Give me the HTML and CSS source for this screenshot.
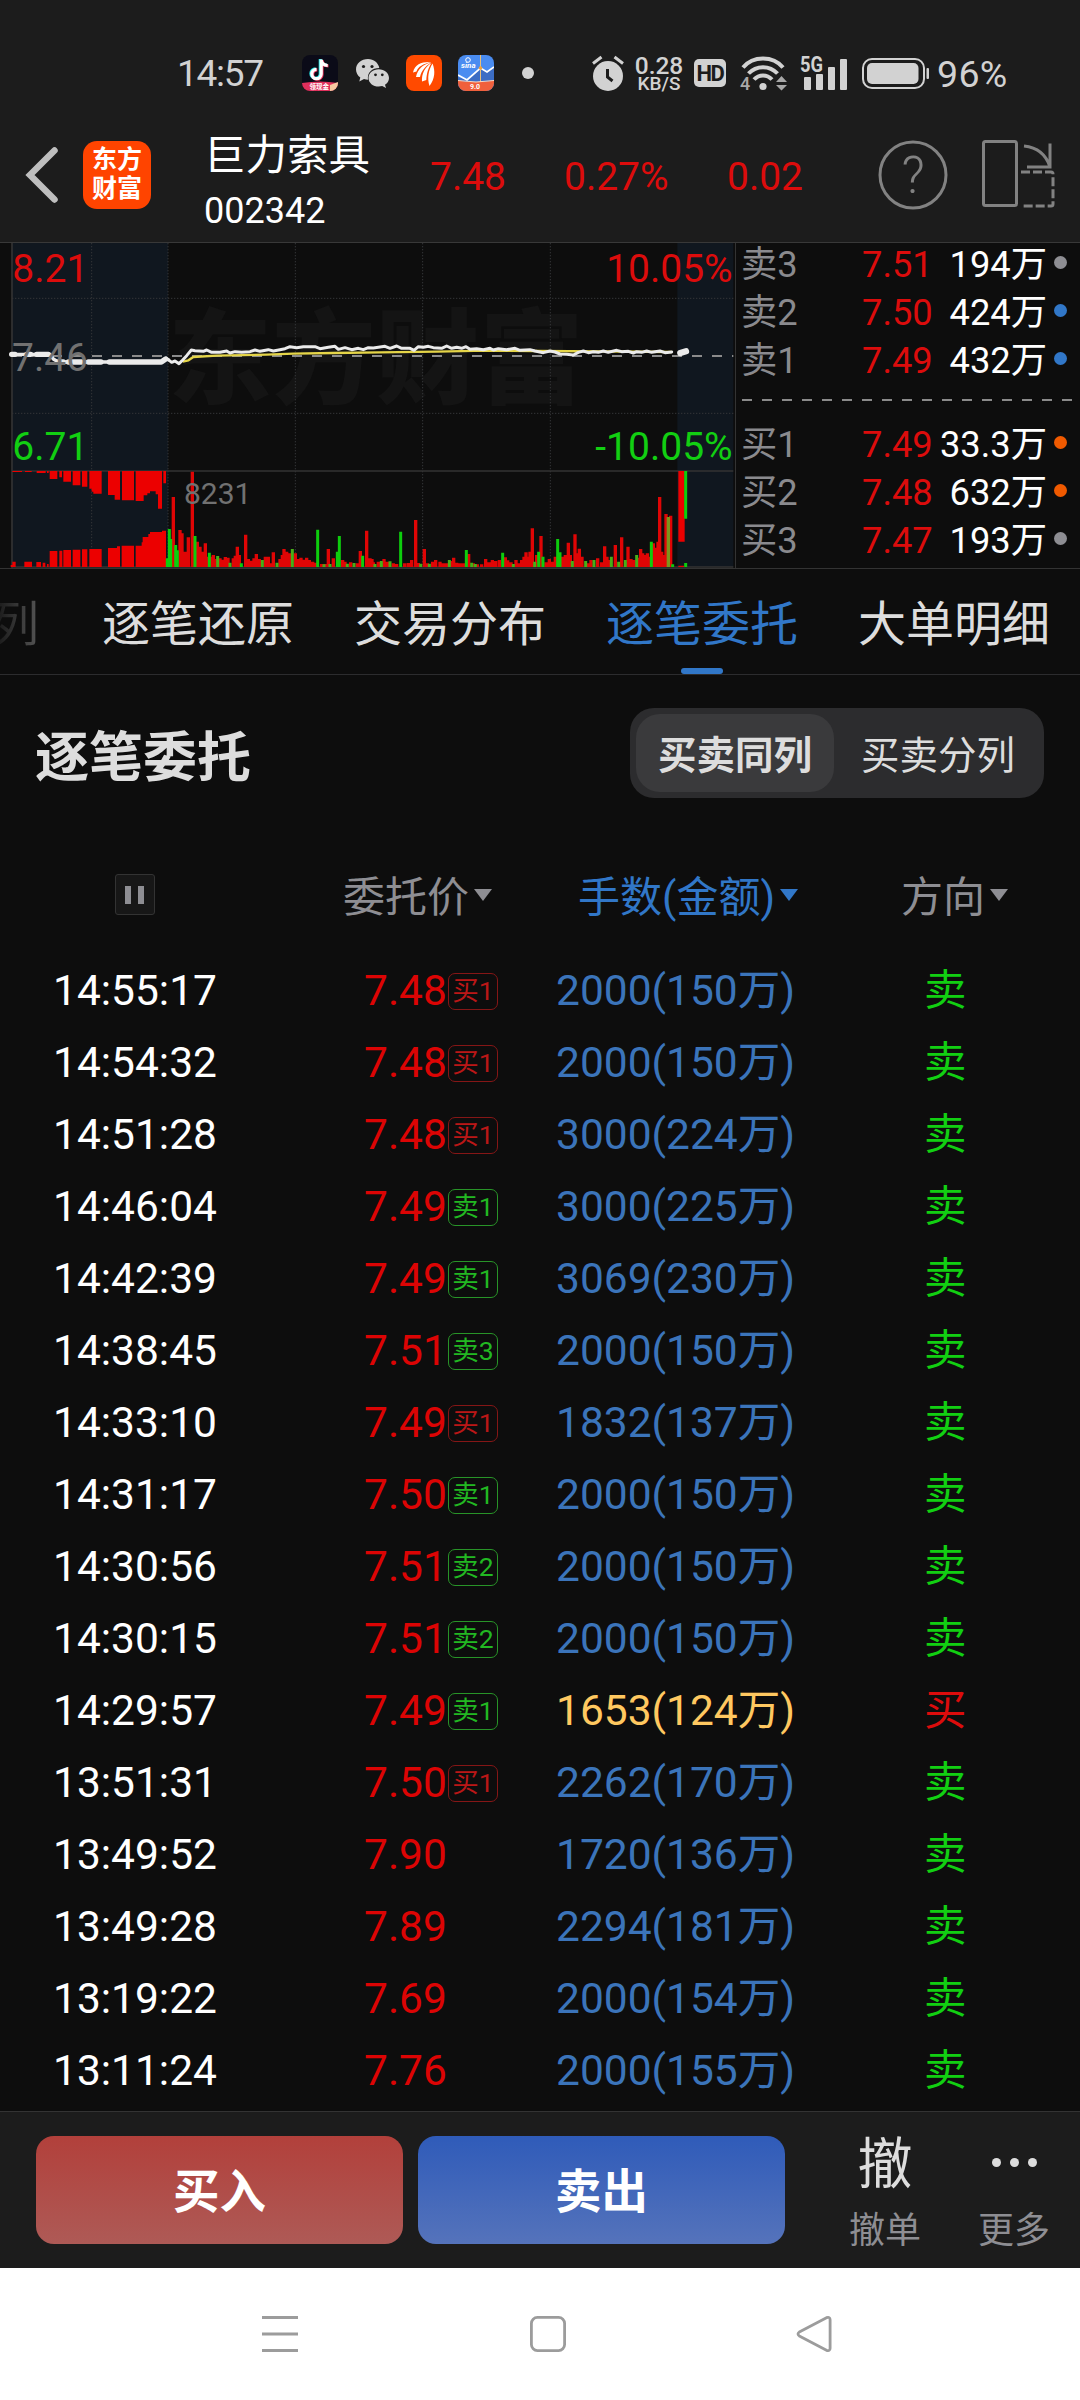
FILE: index.html
```html
<!DOCTYPE html>
<html lang="zh-CN">
<head>
<meta charset="utf-8">
<title>巨力索具 002342</title>
<link rel="stylesheet" href="styles.css">
</head>
<body>
<div class="statusbar">
  <span class="clock">14:57</span>
  <svg class="app-icon" viewBox="0 0 36 36">
    <defs><clipPath id="r1"><rect width="36" height="36" rx="8"/></clipPath></defs>
    <g clip-path="url(#r1)">
      <rect width="36" height="36" fill="#0b0b18"/>
      <g fill="none" stroke-width="3.2"><path d="M18.3 4v14.500a4.700 4.700 0 1 1-4.700-4.700M18.300 4.500c.4 3.200 2.800 5.300 6.500 5.500" stroke="#25e6e6"/><path d="M20 5v14.500a4.700 4.700 0 1 1-4.700-4.700M20 5.500c.4 3.200 2.800 5.300 6.500 5.500" stroke="#f0305a"/><path d="M19.200 4.500v14.500a4.700 4.700 0 1 1-4.700-4.700M19.200 5c.4 3.200 2.800 5.300 6.500 5.500" stroke="#fff"/></g>
      <path d="M0 28q18-3 36 0v9H0z" fill="#e0305c"/><path d="M28 30l8-3v9h-8z" fill="#f6c9a0"/>
      <text class="tiny" x="7.500" y="34" font-size="6.500">领现金</text>
    </g>
  </svg>
  <svg class="wechat" viewBox="0 0 34 29" fill="#d2d2d2">
    <path d="M12 0C5.300 0 0 4.600 0 10.500c0 3.300 1.700 6.100 4.300 8L3.300 22.500l4.700-2.400c1.300.4 2.600.6 4 .6C11 13.500 16 9 23.300 9 22.300 3.800 17.700 0 12 0z"/>
    <path d="M22.700 10.200c-5.700 0-10.200 3.900-10.200 8.700s4.500 8.700 10.200 8.700c1.200 0 2.400-.2 3.500-.5l3.800 1.900-1-3.200c2.400-1.600 4-4 4-6.900 0-4.800-4.600-8.700-10.300-8.700z"/>
    <g fill="#1c1c1c"><circle cx="7.500" cy="7.500" r="1.600"/><circle cx="16" cy="7.500" r="1.600"/><circle cx="19.500" cy="15.800" r="1.400"/><circle cx="26.300" cy="15.800" r="1.400"/></g>
  </svg>
  <svg class="app-icon em" viewBox="0 0 36 36">
    <rect width="36" height="36" rx="8" fill="#ff4a00"/>
    <path d="M7 17.500C9 9 16 6.500 25 7c-8 2-13 4.500-14.500 9.500zM10 22c1.500-8 7-12.500 15-14.500-6.500 4.500-9.500 8.500-11 14.500zM16 26.500c-.5-8 3-14.500 9.500-18.500-3.500 5.500-4.700 10-5.200 17zM23.500 31c-2.500-8-1-16 3-22.500 3 7.500 2.500 15-3 22.500z" fill="#fff"/>
  </svg>
  <svg class="app-icon sina" viewBox="0 0 36 36">
    <defs><clipPath id="r2"><rect width="36" height="36" rx="8"/></clipPath></defs>
    <g clip-path="url(#r2)">
      <rect width="36" height="36" fill="#4a8cf0"/><path d="M0 22l9 3 13-12 7 4 7-5v20H0z" fill="#3c6dc4"/>
      <path d="M0 20l9 5L22.500 13l6.500 4 7-5" fill="none" stroke="#fff" stroke-width="1.800"/>
      <path d="M22.500 0v27" stroke="#e8c07a"/><circle cx="22.500" cy="13" r="1.800" fill="#f2a33a"/>
      <path d="M0 25.500q18 3 36 0V36H0z" fill="#f0603c"/><path d="M0 25.500q18 3 36 0" fill="none" stroke="#fbd9c4"/>
      <text class="tiny" x="3" y="13" font-size="8" font-style="italic">sina</text>
      <circle cx="10" cy="5" r="2.300" fill="none" stroke="#fff"/>
      <text class="tiny" x="12" y="34" font-size="7">9.0</text>
    </g>
  </svg>
  <span class="dot"></span>
  <svg class="alarm" viewBox="0 0 32 35"><circle cx="16" cy="20" r="15" fill="#d2d2d2"/><path d="M1 7.500L9.500 1M31 7.500L22.500 1" stroke="#d2d2d2" stroke-width="3"/><path d="M15.500 13v8l5 4" fill="none" stroke="#1c1c1c" stroke-width="3"/></svg>
  <span class="speed"><b>0.28</b><i>KB/S</i></span>
  <span class="hd">HD</span>
  <svg class="wifi" viewBox="0 0 46 35"><g fill="none" stroke="#d2d2d2" stroke-width="4"><path d="M3 11.500C13-.5 33-.5 43 11.500"/><path d="M8.500 17.500c8-8.500 21-8.500 29 0"/><path d="M14 23.500c5-5.500 13-5.500 18 0"/></g><circle cx="23" cy="30.500" r="3.600" fill="#d2d2d2"/><text x="0" y="34" class="four">4</text><path d="M36 26l5.500-6 5.500 6zM36 29h11l-5.500 5.500z" fill="#a8a8a8"/></svg>
  <svg class="signal" viewBox="0 0 47 33"><text x="-1" y="15" class="fiveg" textLength="23" lengthAdjust="spacingAndGlyphs">5G</text><g fill="#d2d2d2"><rect x="3" y="20" width="7" height="13" rx="1"/><rect x="15" y="17" width="7" height="16" rx="1"/><rect x="27" y="10" width="7" height="23" rx="1"/><rect x="39" y="2" width="7" height="31" rx="1"/></g></svg>
  <svg class="battery" viewBox="0 0 67 31"><rect x="1" y="1" width="61" height="29" rx="9" fill="none" stroke="#d2d2d2" stroke-width="2"/><rect x="5" y="5" width="51.500" height="21" rx="5" fill="#d2d2d2"/><rect x="64.500" y="10" width="2.500" height="11" rx="1" fill="#d2d2d2"/></svg>
  <span class="percent">96%</span>
</div>

<header class="header">
  <svg class="back" viewBox="0 0 32 56"><path d="M28.500 3.500L4 28l24.500 24.500" fill="none" stroke="#bebebe" stroke-width="6.500" stroke-linecap="round"/></svg>
  <div class="logo">东方<br>财富</div>
  <div class="stock"><div class="name">巨力索具</div><div class="code">002342</div></div>
  <span class="quote q1">7.48</span><span class="quote q2">0.27%</span><span class="quote q3">0.02</span>
  <svg class="help" viewBox="0 0 70 70"><circle cx="35" cy="35" r="33" fill="none" stroke="#828282" stroke-width="3"/><text x="35" y="53" text-anchor="middle">?</text></svg>
  <svg class="rotate" viewBox="0 0 72 68" fill="none" stroke="#828282" stroke-width="3"><rect x="1.500" y="1.500" width="33" height="64" rx="2"/><path d="M42 6q20 2 26 21M68 3.500v23.500H45"/><path d="M39 32h30q2 0 2 2v30q0 2-2 2H39" stroke-dasharray="9 3"/></svg>
</header>

<section class="market">
  <svg class="chart" viewBox="0 24 2205 975">
    <rect x="36" y="24" width="468" height="972" fill="#10171f"/>
    <rect x="2032" y="24" width="168" height="972" fill="#10171f"/>
    <text class="watermark" x="505" y="482" textLength="1245">东方财富</text>
    <g stroke="#343638" stroke-width="3" stroke-dasharray="4 5" fill="none">
      <path d="M36 190H2200M36 535H2200M275 24V996M504 24V996M886 24V996M1268 24V996M1651 24V996"/>
    </g>
    <path d="M36 24V999M36 708H2200M36 996H2200" stroke="#333" stroke-width="5" fill="none"/>
    <path d="M36 363H2200" stroke="#8b8b8b" stroke-width="6" stroke-dasharray="30 30"/>
    <g fill="#ec0000">
      <path d="M37 708h29v3h-29zM75 708h20v3h-20zM110 708h27v6h-27zM141 708h5v6h-5zM149 708h23v24h-23zM178 708h8v19h-8zM190 708h23v32h-23zM218 708h23v43h-23zM246 708h16v47h-16zM268 708h37v68h-25v-6h-5v-9h-7zM324 708h36v86h-16v-14h-20zM366 708h36v88h-36zM407 708h79v113h-12v-43h-7v-9h-17v6h-8v6h-11v17h-24zM490 708h8v37h-8z"/>
      <path d="M32 990h5v-10h10v16h-15zM73 980h23v16h-23zM109 981h14v15h-14zM128 983h8v13h-8zM141 987h5v9h-5zM149 948h23v48h-23zM178 947h9v49h-9zM190 945h23v51h-23zM218 944h23v52h-23zM246 943h16v53h-16zM268 942h37v54h-37zM324 939h27v-5h9v62h-36zM365 932h37v64h-37zM407 932h18v-10h3v-16h17v-9h5v-6h36v-4h12v109h-91z"/>
      <path d="M2035 708h19v212h-19zM2035 992h17v4h-17z"/>
    </g>
    <path stroke="#e00505" stroke-width="10" fill="none" d="M520 996V786M540 996V885M546 996V895M556 996V950M565 996V907M577 996V710M592 996V920M600 996V935M607 996V950M616 996V925M622 996V965M634 996V965M640 996V960M648 996V972M660 996V970M668 996V974M676 996V966M684 996V968M700 996V970M706 996V962M712 996V935M718 996V960M737 996V899M745 996V972M755 996V977M762 996V970M769 996V957M778 996V972M796 996V965M805 996V965M812 996V985M820 996V952M840 996V972M847 996V960M852 996V942M860 996V950M868 996V955M886 996V955M895 996V972M903 996V968M912 996V974M920 996V968M928 996V975M938 996V980M946 996V983M965 996V987M975 996V987M985 996V942M1000 996V970M1028 996V975M1035 996V980M1052 996V982M1072 996V985M1081 996V948M1100 996V887M1107 996V970M1116 996V972M1136 996V985M1110 996V970M1120 996V982M1135 996V980M1152 996V972M1162 996V980M1180 996V985M1190 996V987M1214 996V985M1225 996V984M1235 996V975M1247 996V855M1255 996V984M1273 996V942M1282 996V985M1298 996V980M1307 996V975M1320 996V980M1330 996V985M1340 996V985M1355 996V978M1361 996V968M1370 996V983M1380 996V985M1390 996V985M1406 996V957M1420 996V985M1432 996V988M1445 996V988M1457 996V972M1467 996V982M1477 996V975M1487 996V978M1498 996V975M1516 996V967M1523 996V976M1533 996V982M1548 996V975M1557 996V985M1565 996V975M1572 996V965M1578 996V952M1584 996V965M1590 996V950M1597 996V880M1610 996V960M1623 996V903M1638 996V982M1648 996V972M1658 996V980M1666 996V965M1687 996V965M1696 996V960M1705 996V923M1711 996V960M1725 996V898M1731 996V955M1738 996V941M1746 996V965M1765 996V985M1773 996V975M1793 996V970M1805 996V982M1814 996V934M1821 996V965M1827 996V975M1846 996V930M1865 996V907M1884 996V935M1893 996V972M1902 996V975M1916 996V968M1922 996V942M1928 996V955M1935 996V960M1942 996V955M1948 996V965M1960 996V925M1967 996V938M1974 996V920M1979 996V786M1985 996V950M1991 996V960M1998 996V837M2012 996V842"/>
    <path stroke="#0dcd0d" stroke-width="9" fill="none" d="M502 996V970M508 996V882M512 996V912M527 996V930M532 996V946M585 996V903M628 996V953M724 996V985M953 996V884M1012 996V950M1018 996V903M1088 996V962M1202 996V890M1399 996V945M1508 996V953M1616 996V950M1629 996V965M1673 996V912M1680 996V952M1954 996V920M2018 996V988M2057 996V984M2057 708V851"/>
    <path stroke="#46b018" stroke-width="9" fill="none" d="M653 996V963M690 996V983M787 996V975M831 996V983M877 996V942M972 996V988M990 996V987M1042 996V986M1062 996V984M1125 996V987M1144 996V978M1170 996V979M1262 996V986M1288 996V986M1348 996V975M1415 996V983M1426 996V987M1540 996V987M1604 996V980M1717 996V978M1757 996V978M1782 996V975M1834 996V965M1856 996V980M1876 996V975M1910 996V960"/>
    <path stroke="#7c941c" stroke-width="10" d="M2005 996V846"/>
    <path d="M548 380L565 376 580 366 650 362 800 359 880 356 1000 354 1140 352 1310 350 1460 347 1610 348 1810 349 2015 351" fill="none" stroke="#e5d548" stroke-width="7"/>
    <g fill="none" stroke="#ebebeb" stroke-linejoin="round" stroke-linecap="round">
      <path stroke-width="9" d="M505 374L515 382 525 378 537 386 548 375 560 362 574 345 585 347 610 349 620 345 635 352 660 352 680 348 690 354 705 350 725 352 750 350 765 345 780 349 805 344 820 348 840 344 855 341 870 335 890 338 910 335 945 335 960 341 985 337 1005 334 1015 343 1035 338 1055 344 1075 340 1090 344 1105 338 1120 339 1135 337 1155 334 1170 340 1190 333 1205 340 1230 340 1242 346 1255 335 1270 337 1285 334 1300 338 1325 340 1340 333 1355 340 1370 337 1385 340 1398 335 1410 343 1430 341 1450 344 1470 340 1480 345 1495 341 1520 344 1545 340 1560 346 1590 344 1605 348 1630 353 1650 348 1665 351 1680 357 1700 358 1720 360 1735 352 1750 348 1765 353 1780 350 1795 352 1810 348 1825 352 1850 346 1865 350 1885 349 1900 354 1910 350 1925 352 1940 348 1955 352 1980 348 1995 353 2015 351"/>
      <path stroke-width="10" d="M35 358H150L160 372 175 381H485L497 370 505 374"/>
      <path stroke-width="16" d="M35 358H45M80 358H92M110 358H145M175 381H190M205 381H245M265 381H303M328 381H484L497 372"/>
      <path stroke-width="19" d="M2041 354L2058 349"/>
    </g>
    <g class="axis">
      <text x="37" y="141" fill="#dc0c0c">8.21</text>
      <text x="36" y="408" fill="#717171">7.46</text>
      <text x="37" y="675" fill="#12cf12">6.71</text>
      <text x="2198" y="141" fill="#dc0c0c" text-anchor="end">10.05%</text>
      <text x="2198" y="675" fill="#12cf12" text-anchor="end">-10.05%</text>
      <text x="552" y="806" fill="#717171" class="volume">8231</text>
    </g>
  </svg>
  <div class="book">
    <div class="level"><span>卖3</span><b>7.51</b><em>194万</em><i class="gray"></i></div>
    <div class="level"><span>卖2</span><b>7.50</b><em>424万</em><i class="blue"></i></div>
    <div class="level"><span>卖1</span><b>7.49</b><em>432万</em><i class="blue"></i></div>
    <svg class="split" viewBox="0 0 330 2"><path d="M0 1H330" stroke="#8a8a8a" stroke-width="2" stroke-dasharray="10 10"/></svg>
    <div class="level"><span>买1</span><b>7.49</b><em>33.3万</em><i class="orange"></i></div>
    <div class="level"><span>买2</span><b>7.48</b><em>632万</em><i class="orange"></i></div>
    <div class="level"><span>买3</span><b>7.47</b><em>193万</em><i class="gray"></i></div>
  </div>
</section>

<nav class="tabs">
  <span class="tab faded">列</span><span class="tab">逐笔还原</span><span class="tab">交易分布</span><span class="tab active">逐笔委托</span><span class="tab">大单明细</span>
</nav>

<div class="section-head">
  <h1>逐笔委托</h1>
  <div class="segmented"><span class="seg on">买卖同列</span><span class="seg">买卖分列</span></div>
</div>

<div class="grid-head">
  <div><span class="pause"></span></div>
  <div class="sort">委托价</div>
  <div class="sort on">手数(金额)</div>
  <div class="sort">方向</div>
</div>

<main class="orders">
  <div class="row"><span>14:55:17</span><span class="price">7.48<i class="tag buy">买1</i></span><span class="qty">2000(150万)</span><span class="sell">卖</span></div>
  <div class="row"><span>14:54:32</span><span class="price">7.48<i class="tag buy">买1</i></span><span class="qty">2000(150万)</span><span class="sell">卖</span></div>
  <div class="row"><span>14:51:28</span><span class="price">7.48<i class="tag buy">买1</i></span><span class="qty">3000(224万)</span><span class="sell">卖</span></div>
  <div class="row"><span>14:46:04</span><span class="price">7.49<i class="tag">卖1</i></span><span class="qty">3000(225万)</span><span class="sell">卖</span></div>
  <div class="row"><span>14:42:39</span><span class="price">7.49<i class="tag">卖1</i></span><span class="qty">3069(230万)</span><span class="sell">卖</span></div>
  <div class="row"><span>14:38:45</span><span class="price">7.51<i class="tag">卖3</i></span><span class="qty">2000(150万)</span><span class="sell">卖</span></div>
  <div class="row"><span>14:33:10</span><span class="price">7.49<i class="tag buy">买1</i></span><span class="qty">1832(137万)</span><span class="sell">卖</span></div>
  <div class="row"><span>14:31:17</span><span class="price">7.50<i class="tag">卖1</i></span><span class="qty">2000(150万)</span><span class="sell">卖</span></div>
  <div class="row"><span>14:30:56</span><span class="price">7.51<i class="tag">卖2</i></span><span class="qty">2000(150万)</span><span class="sell">卖</span></div>
  <div class="row"><span>14:30:15</span><span class="price">7.51<i class="tag">卖2</i></span><span class="qty">2000(150万)</span><span class="sell">卖</span></div>
  <div class="row"><span>14:29:57</span><span class="price">7.49<i class="tag">卖1</i></span><span class="qty big">1653(124万)</span><span class="bid">买</span></div>
  <div class="row"><span>13:51:31</span><span class="price">7.50<i class="tag buy">买1</i></span><span class="qty">2262(170万)</span><span class="sell">卖</span></div>
  <div class="row"><span>13:49:52</span><span class="price">7.90</span><span class="qty">1720(136万)</span><span class="sell">卖</span></div>
  <div class="row"><span>13:49:28</span><span class="price">7.89</span><span class="qty">2294(181万)</span><span class="sell">卖</span></div>
  <div class="row"><span>13:19:22</span><span class="price">7.69</span><span class="qty">2000(154万)</span><span class="sell">卖</span></div>
  <div class="row"><span>13:11:24</span><span class="price">7.76</span><span class="qty">2000(155万)</span><span class="sell">卖</span></div>
</main>

<footer class="actions">
  <div class="btn buy-btn">买入</div>
  <div class="btn sell-btn">卖出</div>
  <div class="tool cancel"><span class="glyph">撤</span><span class="label">撤单</span></div>
  <div class="tool more"><span class="dots"><i></i><i></i><i></i></span><span class="label">更多</span></div>
</footer>

<div class="navbar">
  <svg viewBox="0 0 36 40" fill="none" stroke="#9c9c9c" stroke-width="3"><path d="M0 3.500h36M0 20h36M0 36.500h36"/></svg>
  <svg viewBox="0 0 36 40" fill="none" stroke="#9c9c9c" stroke-width="2.800"><rect x="1.400" y="3.400" width="33.200" height="33.200" rx="6"/></svg>
  <svg viewBox="0 0 36 40" fill="none" stroke="#9c9c9c" stroke-width="2.800" stroke-linejoin="round"><path d="M30.500 3.700L3.300 18q-2.600 2 0 4l27.200 14.300q3.600 1.200 3.600-2V5.700q0-3.200-3.600-2z"/></svg>
</div>
</body>
</html>
```
FILE: styles.css
```css
* { box-sizing: border-box; }
body {
  margin: 0;
  width: 1080px;
  height: 2400px;
  display: flex;
  flex-direction: column;
  overflow: hidden;
  background: #0d0d0d;
  color: #fff;
  font-family: Roboto, "Noto Sans CJK SC", sans-serif;
}
svg { display: block; flex: none; overflow: visible; }
i, em { font-style: normal; }
b { font-weight: 400; }

/* system status bar */
.statusbar {
  height: 110px;
  flex: none;
  display: flex;
  align-items: center;
  padding: 36px 0 0 177px;
  background: #1c1c1c;
  color: #d2d2d2;
}
.clock { width: 125px; font-size: 37px; letter-spacing: -1.3px; line-height: 40px; padding-top: 1px; }
.app-icon { width: 36px; height: 36px; }
.tiny { fill: #fff; font-weight: 700; }
.wechat { width: 34px; height: 29px; margin-left: 18px; }
.em { margin-left: 16px; }
.sina { margin-left: 16px; }
.dot { width: 12px; height: 12px; border-radius: 50%; background: #d2d2d2; margin-left: 28px; }
.alarm { width: 32px; height: 35px; margin-left: 58px; }
.speed { width: 56px; margin-left: 7px; padding-top: 3px; display: flex; flex-direction: column; align-items: center; font-weight: 500; }
.speed b { font-weight: 500; font-size: 24.5px; line-height: 19px; }
.speed i { font-size: 19px; line-height: 18px; }
.hd { width: 32px; height: 28px; margin-left: 7px; border-radius: 5px; background: #d2d2d2; color: #1c1c1c; font-size: 22px; font-weight: 700; line-height: 29px; letter-spacing: -1.5px; text-align: center; white-space: nowrap; }
.wifi { width: 46px; height: 35px; margin-left: 14px; }
.four { font-size: 18px; font-weight: 500; fill: #a8a8a8; }
.signal { width: 47px; height: 33px; margin-left: 15px; }
.fiveg { font-size: 22px; font-weight: 700; fill: #d2d2d2; }
.battery { width: 67px; height: 31px; margin-left: 14px; }
.percent { margin-left: 8px; font-size: 37.5px; letter-spacing: .3px; line-height: 40px; padding-top: 2px; }

/* stock header */
.header {
  height: 133px;
  flex: none;
  display: flex;
  align-items: center;
  padding: 0 26px;
  background: #1c1c1c;
  border-bottom: 1px solid #383838;
}
.back { width: 32px; height: 56px; margin-top: -3px; }
.logo { width: 68px; height: 68px; margin: -3px 0 0 25px; padding: 4px 0 0; border-radius: 14px; background: #ff4400; font-size: 25px; font-weight: 700; line-height: 29px; text-align: center; }
.stock { margin-left: 53px; width: 226px; padding-top: 11px; }
.name { font-size: 41.5px; line-height: 56px; }
.code { font-size: 36px; line-height: 50px; margin-top: 2px; }
.quote { color: #dc0c0c; font-size: 39px; line-height: 44px; padding-top: 1px; }
.q1 { width: 134px; }
.q2 { width: 163px; }
.q3 { width: 151px; }
.help { width: 70px; height: 70px; margin-top: -3px; }
.help text { fill: #828282; font-size: 51px; font-weight: 300; }
.rotate { width: 72px; height: 68px; margin: -4px 0 0 34px; }

/* chart and order book */
.market { height: 326px; flex: none; display: flex; border-bottom: 1px solid #333; }
.chart { width: 736px; height: 325px; border-right: 1px solid #333; }
.watermark { font-size: 310px; font-weight: 900; fill: #141414; }
.axis { font-size: 117px; }
.volume { font-size: 90px; }
.book { flex: 1; }
.level {
  height: 48px;
  display: grid;
  grid-template-columns: 121px 76px 109px 20px;
  align-items: center;
  padding-left: 5px;
  font-size: 36.3px;
  line-height: 48px;
  position: relative;
  top: -2px;
}
.level span { color: #8a8a8e; }
.level b { color: #dc0c0c; }
.level em { text-align: right; white-space: nowrap; }
.level i { width: 13px; height: 13px; border-radius: 50%; justify-self: end; margin-top: -6px; }
.gray { background: #8e8e93; }
.blue { background: #3177c8; }
.orange { background: #f05a00; }
.split { width: 330px; height: 2px; margin: 12px 0 22px 6px; }

/* tabs */
.tabs {
  height: 106px;
  flex: none;
  display: flex;
  gap: 60px;
  margin-left: -6px;
  padding-top: 4px;
  border-bottom: 1px solid #2c2c2e;
  color: #ddd;
  font-size: 48px;
  line-height: 104px;
  white-space: nowrap;
}
.tab { position: relative; height: 101px; }
.faded { margin-left: -3px; margin-right: 3px; background: linear-gradient(90deg, #111, #555); background-clip: text; color: transparent; }
.active { color: #3177c8; }
.active::after { content: ""; position: absolute; left: 75px; bottom: 0; width: 42px; height: 6px; border-radius: 3px; background: #3177c8; }

/* section title and switch */
.section-head { height: 156px; flex: none; display: flex; align-items: center; justify-content: space-between; padding: 0 36px; }
h1 { margin: 11px 0 0 -1px; font-size: 54px; font-weight: 700; line-height: 70px; color: #ddd; }
.segmented { width: 414px; height: 90px; display: flex; padding: 6px; border-radius: 24px; background: #2c2c2e; color: #ddd; font-size: 38.5px; line-height: 84px; text-align: center; }
.seg { flex: 1; padding-left: 4px; }
.seg.on { flex: none; width: 198px; height: 78px; padding: 0; border-radius: 24px; background: #3a3a3c; font-weight: 600; }

/* order table */
.grid-head, .row { display: grid; padding-left: 53px; flex: none; }
.grid-head { height: 124px; grid-template-columns: 290px 235px 323px 179px; color: #8e8e93; font-size: 42px; line-height: 50px; padding-top: 42px; }
.pause { display: block; margin: 1px 0 0 62px; width: 40px; height: 41px; border: 1px solid #333; border-radius: 3px; background: linear-gradient(#8e8e93, #8e8e93) 9px 11px / 6px 18px no-repeat, linear-gradient(#8e8e93, #8e8e93) 22px 11px / 6px 18px no-repeat, #171717; }
.sort { white-space: nowrap; }
.sort::after { content: ""; display: inline-block; margin-left: 5px; border: 9px solid transparent; border-top: 12px solid; border-bottom: 0; vertical-align: 11px; }
.sort.on { color: #3177c8; }
.row { height: 72px; grid-template-columns: 311px 192px 368px 156px; font-size: 42.5px; line-height: 72px; }
.price { display: flex; align-items: center; color: #dc0404; }
.tag { width: 50px; height: 37px; margin: 0 0 0 1px; border: 1px solid #289428; border-radius: 7px; color: #22b822; font-size: 26.5px; line-height: 34px; text-align: center; }
.tag.buy { border-color: #851616; color: #bb1717; }
.qty { color: #3b74ba; }
.qty.big { color: #ffc860; }
.sell { color: #12cf12; }
.bid { color: #dc0c0c; }

/* bottom actions */
.actions { height: 157px; flex: none; display: flex; padding: 24px 0 0 36px; margin-top: 4px; background: #1c1c1c; border-top: 1px solid #333; }
.btn { width: 367px; height: 108px; border-radius: 18px; margin-right: 15px; font-size: 46.5px; font-weight: 700; line-height: 112px; text-align: center; }
.buy-btn { background: linear-gradient(#b2403b, #ae5a56); }
.sell-btn { background: linear-gradient(#2f5bb9, #5573bb); }
.tool { display: flex; flex-direction: column; align-items: center; width: 74px; }
.cancel { margin-left: 48px; }
.more { margin-left: 55px; }
.glyph { font-size: 55px; line-height: 56px; height: 58px; color: #ddd; }
.dots { display: flex; gap: 9px; height: 58px; padding-top: 22px; }
.dots i { width: 9px; height: 9px; border-radius: 50%; background: #ddd; }
.label { margin-top: 15px; font-size: 36px; line-height: 44px; color: #8e8e93; white-space: nowrap; }

/* system navigation */
.navbar { height: 132px; flex: none; display: flex; align-items: center; gap: 231px; padding-left: 262px; background: #fff; }
.navbar svg { width: 36px; height: 40px; }
.navbar svg:nth-child(2) { margin: 0 -1px 0 1px; }
```
